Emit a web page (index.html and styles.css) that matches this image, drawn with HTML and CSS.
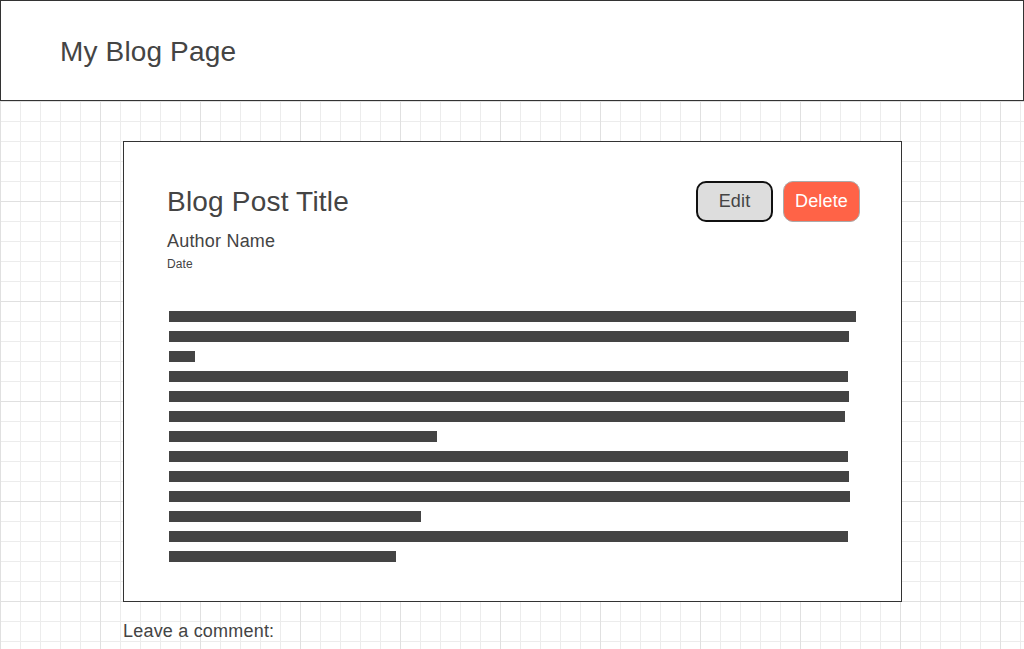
FILE: index.html
```html
<!DOCTYPE html>
<html lang="en">
<head>
<meta charset="utf-8">
<title>My Blog Page</title>
<link rel="stylesheet" href="styles.css">
</head>
<body>
<header class="site-header">
  <h1 class="site-title">My Blog Page</h1>
</header>
<main class="main">
  <article class="post">
    <div class="post-head">
      <h2 class="post-title">Blog Post Title</h2>
      <div class="actions">
        <button class="btn btn-edit">Edit</button>
        <button class="btn btn-delete">Delete</button>
      </div>
    </div>
    <div class="author">Author Name</div>
    <div class="date">Date</div>
    <div class="lines">
      <span class="line" style="width:687px"></span>
      <span class="line" style="width:680px"></span>
      <span class="line" style="width:26px"></span>
      <span class="line" style="width:679px"></span>
      <span class="line" style="width:680px"></span>
      <span class="line" style="width:676px"></span>
      <span class="line" style="width:268px"></span>
      <span class="line" style="width:679px"></span>
      <span class="line" style="width:680px"></span>
      <span class="line" style="width:681px"></span>
      <span class="line" style="width:252px"></span>
      <span class="line" style="width:679px"></span>
      <span class="line" style="width:227px"></span>
    </div>
  </article>
  <p class="comment-label">Leave a comment:</p>
</main>
</body>
</html>
```

FILE: styles.css
```css
html, body {
  margin: 0;
  padding: 0;
}
body {
  font-family: "Liberation Sans", Arial, sans-serif;
  color: #444;
  background-color: #fff;
  background-image:
    linear-gradient(to right, #e0e0e0 1px, transparent 1px),
    linear-gradient(to bottom, #e0e0e0 1px, transparent 1px),
    linear-gradient(to right, #ececec 1px, transparent 1px),
    linear-gradient(to bottom, #ececec 1px, transparent 1px);
  background-size: 100px 100px, 100px 100px, 20px 20px, 20px 20px;
  background-position: 0 1px, 0 1px, 0 1px, 0 1px;
  min-height: 100vh;
  overflow: hidden;
}
.site-header {
  box-sizing: border-box;
  height: 101px;
  border: 1px solid #333;
  background: #fff;
  display: flex;
  align-items: center;
  padding-left: 59px;
  padding-top: 3px;
}
.site-title {
  margin: 0;
  font-size: 28px;
  font-weight: normal;
  line-height: 32px;
  letter-spacing: 0.15px;
}
.main {
  padding: 40px 0 0 123px;
}
.post {
  box-sizing: border-box;
  width: 779px;
  height: 461px;
  border: 1px solid #333;
  background: #fff;
  padding: 39px 41px 0 43px;
}
.post-head {
  display: flex;
  align-items: center;
  justify-content: space-between;
  height: 41px;
}
.post-title {
  margin: 0;
  font-size: 28px;
  font-weight: normal;
  line-height: 32px;
  letter-spacing: 0.2px;
}
.actions {
  display: flex;
  gap: 10px;
}
.btn {
  box-sizing: border-box;
  width: 77px;
  height: 41px;
  font-family: "Liberation Sans", Arial, sans-serif;
  font-size: 18px;
  border-radius: 10px;
  padding: 0;
  cursor: pointer;
  letter-spacing: 0.15px;
}
.btn-edit {
  background: #ddd;
  border: 2px solid #111;
  color: #444;
}
.btn-delete {
  background: #ff6347;
  border: 1px solid #aaa;
  color: #fff;
}
.author {
  margin-top: 9px;
  font-size: 18px;
  line-height: 21px;
  letter-spacing: 0.2px;
}
.date {
  margin-top: 5px;
  font-size: 12px;
  line-height: 14px;
  letter-spacing: 0.1px;
}
.lines {
  margin-top: 40px;
  padding-left: 2px;
  display: flex;
  flex-direction: column;
  gap: 9px;
}
.line {
  display: block;
  height: 11px;
  background: #444;
}
.comment-label {
  margin: 19px 0 0;
  font-size: 18px;
  line-height: 21px;
  letter-spacing: 0.2px;
}
```
